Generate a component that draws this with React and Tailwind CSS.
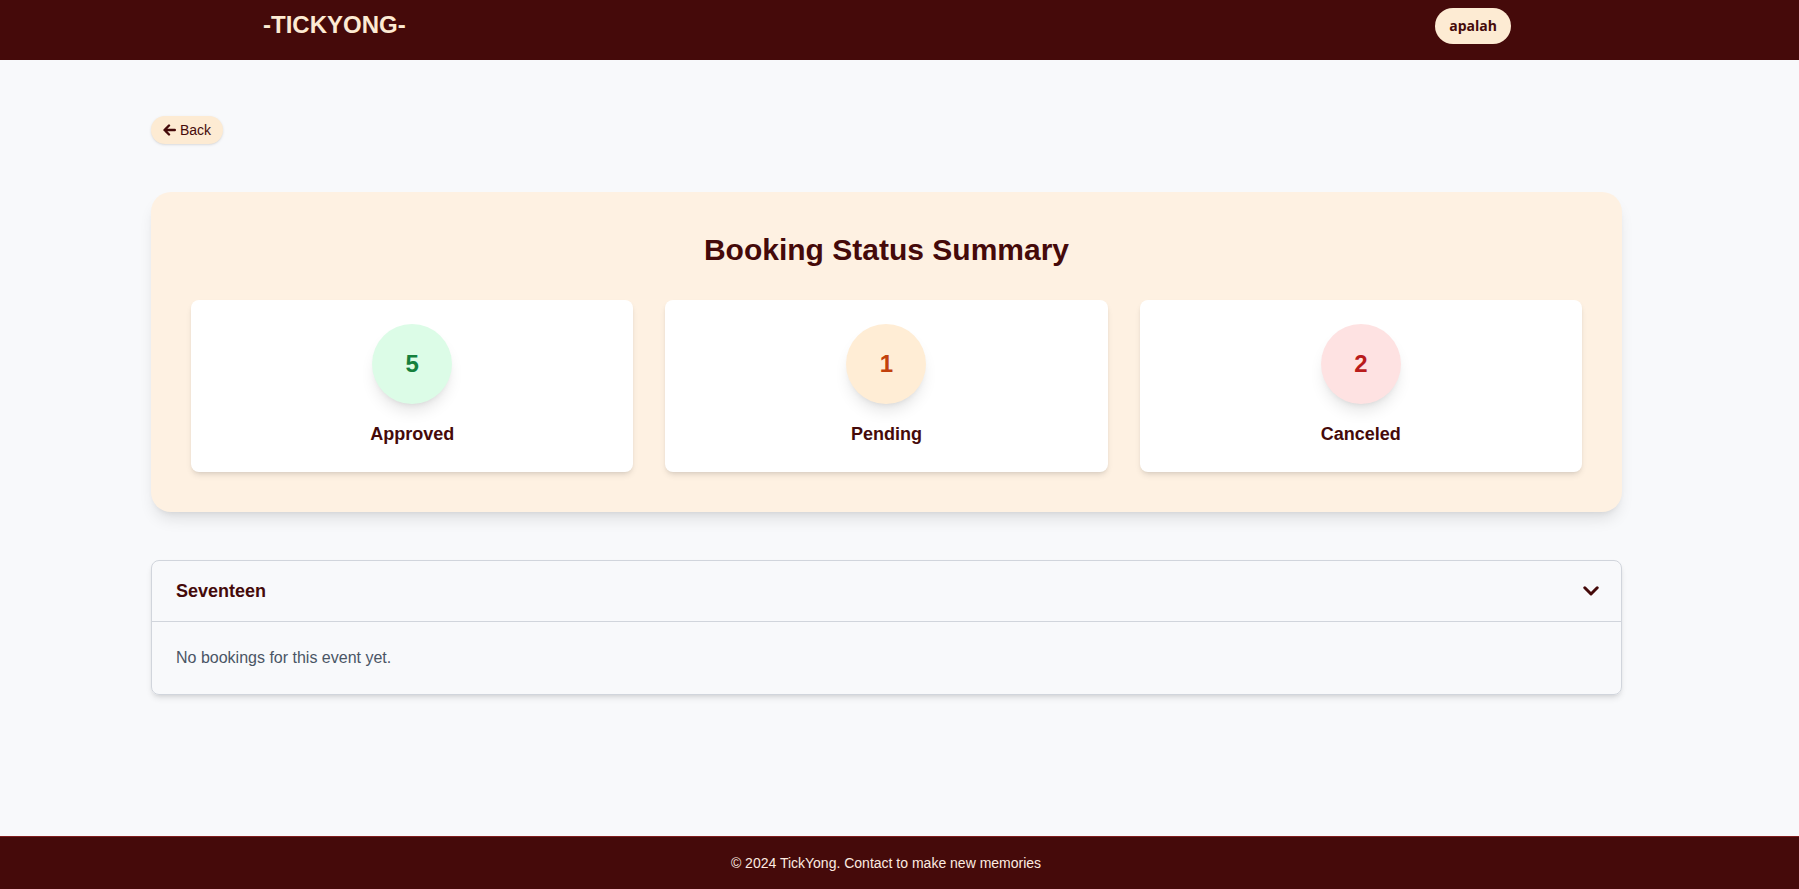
const STATS = [
  { label: 'Approved', count: 5, circle: 'bg-[#dcfce7] text-[#15803d]' },
  { label: 'Pending', count: 1, circle: 'bg-[#ffedd5] text-[#c2410c]' },
  { label: 'Canceled', count: 2, circle: 'bg-[#fee2e2] text-[#b91c1c]' },
]

function StatCard({ label, count, circle }) {
  return (
    <div className="bg-white rounded-lg shadow-md pt-6 pb-6 flex flex-col items-center">
      <div className={`w-20 h-20 rounded-full shadow-lg flex items-center justify-center text-2xl font-bold ${circle}`}>
        {count}
      </div>
      <p className="mt-4 text-lg leading-7 font-bold text-[#450a0a]">{label}</p>
    </div>
  )
}

export default function App() {
  return (
    <div className="min-h-screen flex flex-col bg-[#f8f9fb] font-['Liberation_Sans',Arial,sans-serif]">
      <header className="h-[60px] bg-[#450a0a] shrink-0">
        <div className="ml-[150px] w-[1472px] pt-2 pl-[113px] pr-[111px] flex items-start justify-between">
          <h1 className="mt-px text-2xl leading-8 font-bold text-[#fdebd3]">-TICKYONG-</h1>
          <button className="h-9 px-[14px] rounded-full bg-[#fdebd3] text-[#450a0a] text-sm font-bold font-['Open_Sans',sans-serif]">
            apalah
          </button>
        </div>
      </header>

      <main className="flex-1 pt-[56px] pb-12">
        <div className="ml-[151px] w-[1471px]">
          <button className="h-7 px-3 rounded-full bg-[#fdebd3] text-[#450a0a] text-sm shadow-sm flex items-center gap-1">
            <svg width="13" height="12" viewBox="0 0 13 12" fill="none" stroke="currentColor" strokeWidth="2.4" strokeLinecap="round" strokeLinejoin="round">
              <path d="M6 1.5 1.5 6 6 10.5M1.8 6h10" />
            </svg>
            Back
          </button>

          <section className="mt-12 bg-[#fef1e2] rounded-[20px] shadow-lg p-10">
            <h2 className="text-3xl leading-9 font-bold text-center text-[#450a0a]">Booking Status Summary</h2>
            <div className="mt-8 grid grid-cols-3 gap-8">
              {STATS.map((s) => (
                <StatCard key={s.label} {...s} />
              ))}
            </div>
          </section>

          <section className="mt-12 border border-gray-300 rounded-lg shadow-md overflow-hidden">
            <div className="flex items-center justify-between pl-6 pr-[22px] py-4 border-b border-gray-300">
              <h3 className="text-lg leading-7 font-bold text-[#450a0a]">Seventeen</h3>
              <svg width="16" height="10" viewBox="0 0 16 10" fill="none" stroke="#450a0a" strokeWidth="3" strokeLinecap="round" strokeLinejoin="round">
                <path d="M1.8 1.8 8 8l6.2-6.2" />
              </svg>
            </div>
            <div className="p-6">
              <p className="text-base leading-6 text-gray-600">No bookings for this event yet.</p>
            </div>
          </section>
        </div>
      </main>

      <footer className="bg-[#450a0a] border-t border-[#7f1d1d] py-4 shrink-0">
        <p className="pr-[27px] text-center text-sm leading-5 text-[#fdebe0]">© 2024 TickYong. Contact to make new memories</p>
      </footer>
    </div>
  )
}
